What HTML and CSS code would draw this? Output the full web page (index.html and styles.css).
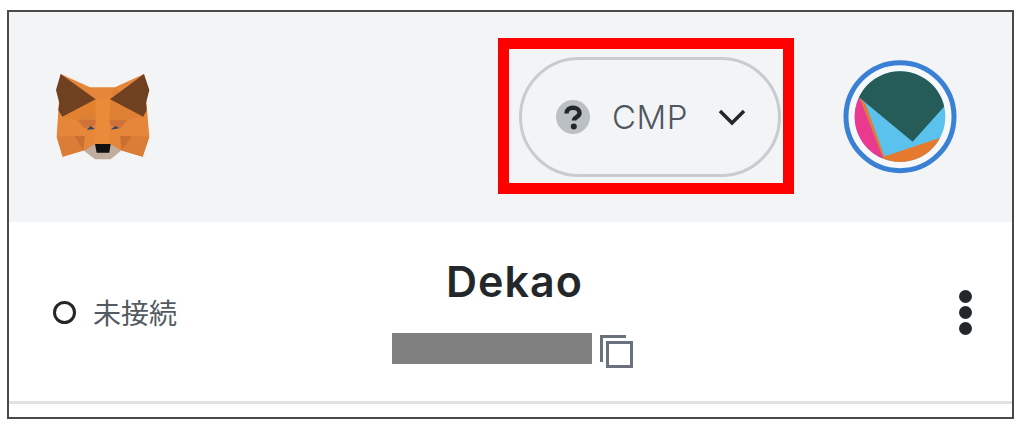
FILE: index.html
```html
<!DOCTYPE html>
<html lang="ja">
  <head>
    <meta charset="UTF-8" />
    <meta name="viewport" content="width=device-width, initial-scale=1.0" />
    <title>MetaMask</title>
    <link rel="stylesheet" href="styles.css">
  </head>
  <body>
    <div class="frame">
      <header class="top-bar">
        <svg class="fox" viewBox="0 0 360 330">
          <polygon fill="#e6863a" points="62,42 150,82 225,82 312,42 328,230 308,290 240,270 135,270 68,290 50,230"/>
          <polygon fill="#e2812f" points="150,82 167,118 168,180 112,180 68,170 167,118"/>
          <polygon fill="#df8034" points="225,82 210,118 208,180 262,180 310,170"/>
          <polygon fill="#e98b39" points="167,118 210,118 208,255 165,255"/>
          <polygon fill="#dc8036" points="112,180 150,155 167,180"/>
          <polygon fill="#dc8036" points="262,180 225,155 208,180"/>
          <polygon fill="#cf7238" points="112,180 168,180 165,197 133,205"/>
          <polygon fill="#cf7238" points="262,180 208,180 212,197 242,205"/>
          <polygon fill="#dc7d37" points="50,230 102,228 135,270 68,290"/>
          <polygon fill="#dc7d37" points="328,230 276,228 240,270 308,290"/>
          <polygon fill="#c96f30" points="102,228 135,228 130,270"/>
          <polygon fill="#c96f30" points="276,228 240,228 245,270"/>
          <polygon fill="#6f4120" points="62,42 167,118 67,170 55,150 58,130 48,90"/>
          <polygon fill="#6f4120" points="312,42 210,118 310,170 320,150 318,130 328,90"/>
          <polygon fill="#2f4560" points="140,209 152,198 165,207"/>
          <polygon fill="#2f4560" points="212,209 226,198 238,205"/>
          <polygon fill="#c0ad9e" points="132,272 165,252 212,252 243,272 212,298 165,298"/>
          <polygon fill="#111111" points="165,252 212,252 208,278 170,278"/>
        </svg>
        <div class="highlight">
          <button class="network-pill">
            <svg class="network-icon" viewBox="0 0 34 34">
              <circle cx="17" cy="17" r="17" fill="#bbc0c5"/>
              <path d="M10.500 13.500c0-3.800 2.800-5.700 6.500-5.700s6.500 2 6.500 5.200c0 4.200-5.500 4-5.500 7.500" fill="none" stroke="#24272a" stroke-width="4.500"/>
              <circle cx="17.800" cy="26.500" r="3" fill="#24272a"/>
            </svg>
            <span class="network-name">CMP</span>
            <svg class="chevron" viewBox="0 0 28 18">
              <path d="M2 3l12 12L26 3" fill="none" stroke="#24272a" stroke-width="3.500"/>
            </svg>
          </button>
        </div>
        <svg class="avatar" viewBox="0 0 420 390">
          <defs>
            <clipPath id="avatar-clip"><circle cx="210" cy="200" r="136"/></clipPath>
          </defs>
          <circle cx="210" cy="200" r="162" fill="#f7f8fa" stroke="#3a80d5" stroke-width="15"/>
          <g clip-path="url(#avatar-clip)">
            <rect x="60" y="50" width="300" height="300" fill="#5bc2ee"/>
            <polygon fill="#e93a8f" points="88,140 160,325 120,360 50,300 50,140"/>
            <polygon fill="#e57a2e" points="88,140 108,165 164,322 158,322"/>
            <polygon fill="#e57a2e" points="160,320 335,262 360,380 160,380"/>
            <polygon fill="#265c58" points="85,140 248,275 342,170 360,40 60,40"/>
          </g>
        </svg>
      </header>
      <section class="account">
        <div class="status">
          <span class="status-dot"></span>
          <span>未接続</span>
        </div>
        <div class="account-info">
          <h1 class="account-name">Dekao</h1>
          <div class="address-row">
            <div class="address-mask"></div>
            <svg class="copy-icon" viewBox="0 0 33 33">
              <path d="M1.500 27V1.500H26M7.500 7.500h24v24h-24z" fill="none" stroke="#6a737d" stroke-width="3"/>
            </svg>
          </div>
        </div>
        <div class="menu-dots">
          <span class="menu-dot"></span>
          <span class="menu-dot"></span>
          <span class="menu-dot"></span>
        </div>
      </section>
    </div>
  </body>
</html>
```

FILE: styles.css
```css
* {
  margin: 0;
  padding: 0;
  box-sizing: border-box;
}

body {
  background-color: #fff;
  font-family: "Inter", "Noto Sans CJK JP", sans-serif;
}

.frame {
  width: 1007px;
  height: 409px;
  margin: 10px 0 0 7px;
  border: 2px solid #4a4a4a;
  overflow: hidden;
}

.top-bar {
  height: 210px;
  background-color: #f2f4f6;
  display: flex;
  align-items: center;
  padding: 0 0 0 31px;
}

.fox {
  width: 120px;
  height: 110px;
  margin-top: -4px;
}

.highlight {
  width: 296px;
  height: 156px;
  margin: -2px 0 0 338px;
  border: 11px solid #f00;
  padding: 8px 3px 6px 10px;
}

.network-pill {
  width: 262px;
  height: 120px;
  border: 3px solid #c8ccd0;
  border-radius: 60px;
  background: none;
  display: flex;
  align-items: center;
  padding-left: 34px;
  font-family: inherit;
}

.network-icon {
  width: 34px;
  height: 34px;
}

.network-name {
  width: 75px;
  font-size: 33px;
  font-weight: 300;
  color: #4f565d;
  margin-left: 22px;
  letter-spacing: 0.5px;
}

.chevron {
  width: 28px;
  height: 18px;
  margin-left: 31px;
}

.avatar {
  width: 140px;
  height: 130px;
  margin: -4px 0 0 36px;
}

.account {
  height: 182px;
  border-bottom: 3px solid #e0e1e4;
  display: flex;
  align-items: flex-start;
  padding-left: 44px;
}

.status {
  display: flex;
  align-items: center;
  gap: 17px;
  margin-top: 70px;
  font-size: 28px;
  color: #535a61;
  width: 339px;
}

.status-dot {
  width: 23px;
  height: 23px;
  margin: 1px 0 0 0;
  border: 3px solid #24272a;
  border-radius: 50%;
}

.account-info {
  width: 241px;
  display: flex;
  flex-direction: column;
}

.account-name {
  font-size: 43px;
  font-weight: 600;
  line-height: 50px;
  letter-spacing: 1px;
  color: #24272a;
  margin: 34px 0 0 54px;
}

.address-row {
  display: flex;
  align-items: flex-start;
  gap: 8px;
  margin-top: 27px;
}

.address-mask {
  width: 200px;
  height: 31px;
  background-color: #808080;
}

.copy-icon {
  width: 33px;
  height: 33px;
  margin-top: 2px;
}

.menu-dots {
  display: flex;
  flex-direction: column;
  gap: 3px;
  margin: 68px 0 0 326px;
}

.menu-dot {
  width: 13px;
  height: 13px;
  border-radius: 50%;
  background-color: #24272a;
}
```
